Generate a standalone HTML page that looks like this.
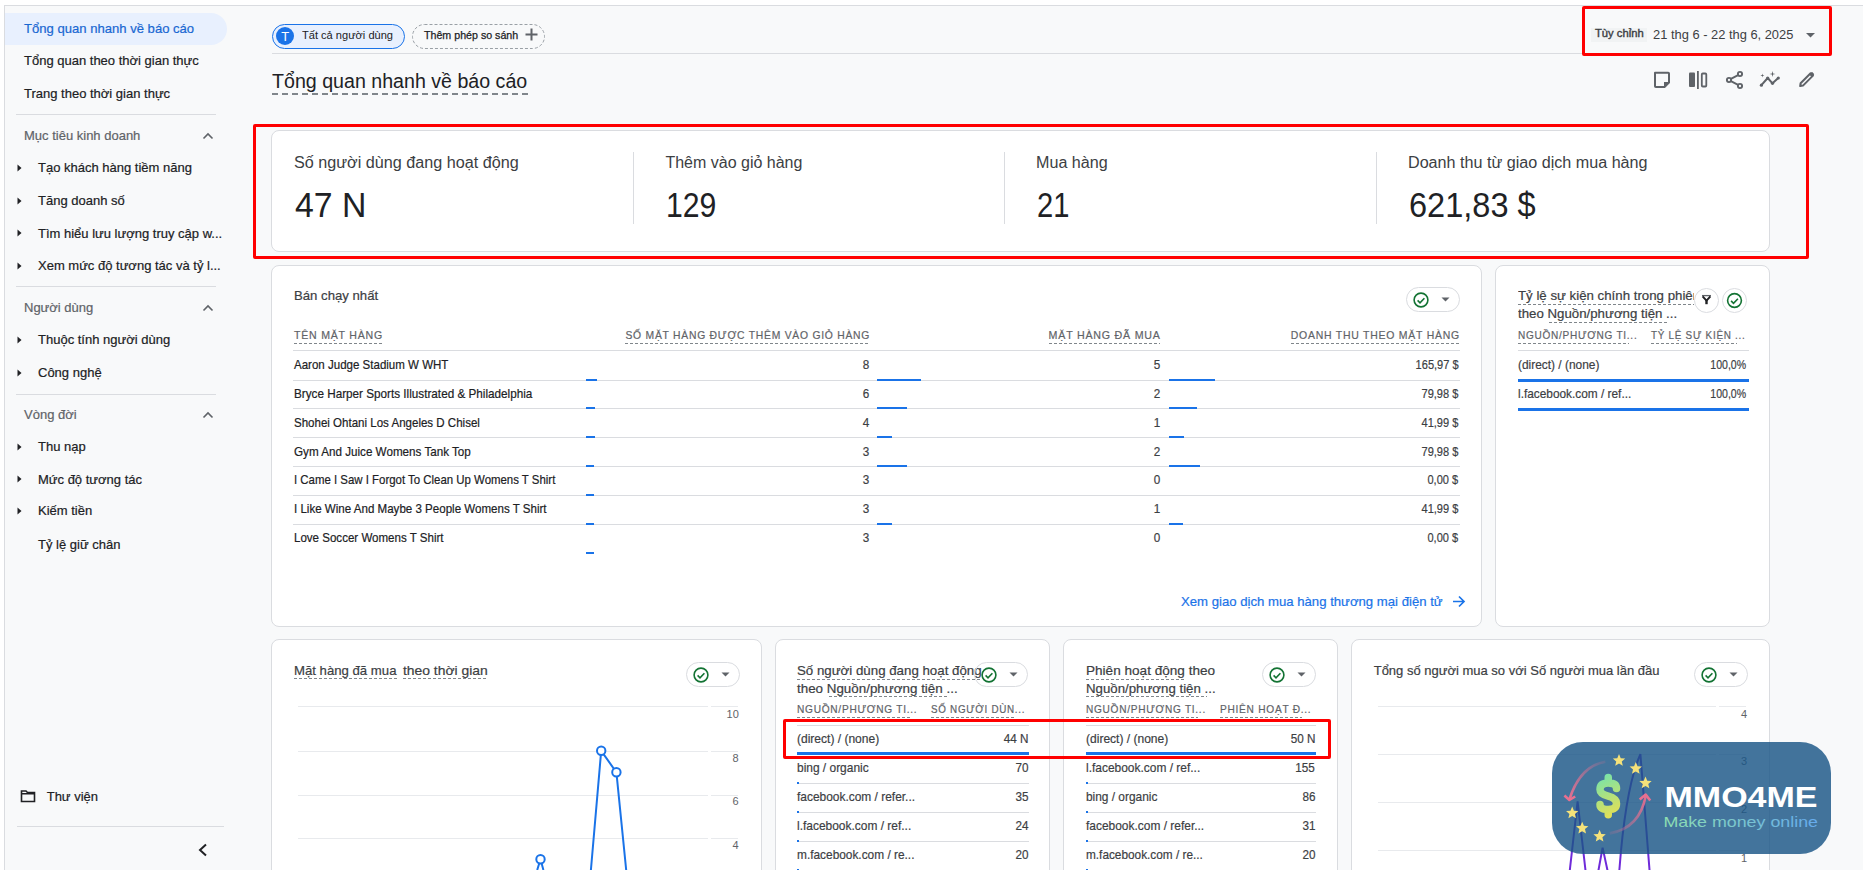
<!DOCTYPE html>
<html><head><meta charset="utf-8"><title>GA</title>
<style>
html,body{margin:0;padding:0;}
body{width:1863px;height:870px;overflow:hidden;position:relative;background:#f8f9fa;font-family:"Liberation Sans",sans-serif;}
.t{position:absolute;white-space:nowrap;}
.b{position:absolute;}
</style></head><body>
<div class="b" style="left:0px;top:0px;width:1863px;height:5px;background:#fff"></div>
<div class="b" style="left:0px;top:5px;width:1863px;height:1px;background:#dadce0"></div>
<div class="b" style="left:0px;top:5px;width:4px;height:865px;background:#fff"></div>
<div class="b" style="left:4px;top:5px;width:1px;height:865px;background:#dadce0"></div>
<div class="b" style="left:5px;top:13px;width:222px;height:32px;background:#e8f0fe;border-radius:0 16px 16px 0"></div>
<div class="t" style="top:22.00px;font-size:13px;line-height:13px;color:#1967d2;left:24.00px;transform-origin:0 0;transform:scaleX(1.0059);-webkit-text-stroke:0.2px currentColor;">Tổng quan nhanh về báo cáo</div>
<div class="t" style="top:54.00px;font-size:13px;line-height:13px;color:#202124;left:24.00px;transform-origin:0 0;-webkit-text-stroke:0.2px currentColor;">Tổng quan theo thời gian thực</div>
<div class="t" style="top:87.00px;font-size:13px;line-height:13px;color:#202124;left:24.00px;transform-origin:0 0;-webkit-text-stroke:0.2px currentColor;">Trang theo thời gian thực</div>
<div class="b" style="left:16px;top:114px;width:200px;height:1px;background:#dadce0"></div>
<div class="t" style="top:129.00px;font-size:13px;line-height:13px;color:#5f6368;left:24.00px;transform-origin:0 0;-webkit-text-stroke:0.2px currentColor;">Mục tiêu kinh doanh</div>
<svg class="b" style="left:202px;top:132px;" width="12" height="8" viewBox="0 0 12 8"><path d="M1.5 6.5 L6 2 L10.5 6.5" fill="none" stroke="#5f6368" stroke-width="1.6"/></svg>
<svg class="b" style="left:17px;top:163.9px;" width="5" height="8" viewBox="0 0 5 8"><path d="M0.5 0.5 L4.5 4 L0.5 7.5Z" fill="#202124"/></svg>
<div class="t" style="top:161.40px;font-size:13px;line-height:13px;color:#202124;left:38.00px;transform-origin:0 0;-webkit-text-stroke:0.2px currentColor;">Tạo khách hàng tiềm năng</div>
<svg class="b" style="left:17px;top:196.5px;" width="5" height="8" viewBox="0 0 5 8"><path d="M0.5 0.5 L4.5 4 L0.5 7.5Z" fill="#202124"/></svg>
<div class="t" style="top:194.00px;font-size:13px;line-height:13px;color:#202124;left:38.00px;transform-origin:0 0;-webkit-text-stroke:0.2px currentColor;">Tăng doanh số</div>
<svg class="b" style="left:17px;top:229.10000000000002px;" width="5" height="8" viewBox="0 0 5 8"><path d="M0.5 0.5 L4.5 4 L0.5 7.5Z" fill="#202124"/></svg>
<div class="t" style="top:226.60px;font-size:13px;line-height:13px;color:#202124;left:38.00px;transform-origin:0 0;-webkit-text-stroke:0.2px currentColor;">Tìm hiểu lưu lượng truy cập w...</div>
<svg class="b" style="left:17px;top:261.70000000000005px;" width="5" height="8" viewBox="0 0 5 8"><path d="M0.5 0.5 L4.5 4 L0.5 7.5Z" fill="#202124"/></svg>
<div class="t" style="top:259.20px;font-size:13px;line-height:13px;color:#202124;left:38.00px;transform-origin:0 0;-webkit-text-stroke:0.2px currentColor;">Xem mức độ tương tác và tỷ l...</div>
<div class="b" style="left:16px;top:286px;width:200px;height:1px;background:#dadce0"></div>
<div class="t" style="top:301.20px;font-size:13px;line-height:13px;color:#5f6368;left:24.00px;transform-origin:0 0;-webkit-text-stroke:0.2px currentColor;">Người dùng</div>
<svg class="b" style="left:202px;top:304px;" width="12" height="8" viewBox="0 0 12 8"><path d="M1.5 6.5 L6 2 L10.5 6.5" fill="none" stroke="#5f6368" stroke-width="1.6"/></svg>
<svg class="b" style="left:17px;top:335.9px;" width="5" height="8" viewBox="0 0 5 8"><path d="M0.5 0.5 L4.5 4 L0.5 7.5Z" fill="#202124"/></svg>
<div class="t" style="top:333.40px;font-size:13px;line-height:13px;color:#202124;left:38.00px;transform-origin:0 0;-webkit-text-stroke:0.2px currentColor;">Thuộc tính người dùng</div>
<svg class="b" style="left:17px;top:368.9px;" width="5" height="8" viewBox="0 0 5 8"><path d="M0.5 0.5 L4.5 4 L0.5 7.5Z" fill="#202124"/></svg>
<div class="t" style="top:366.40px;font-size:13px;line-height:13px;color:#202124;left:38.00px;transform-origin:0 0;-webkit-text-stroke:0.2px currentColor;">Công nghệ</div>
<div class="b" style="left:16px;top:394px;width:200px;height:1px;background:#dadce0"></div>
<div class="t" style="top:408.00px;font-size:13px;line-height:13px;color:#5f6368;left:24.00px;transform-origin:0 0;-webkit-text-stroke:0.2px currentColor;">Vòng đời</div>
<svg class="b" style="left:202px;top:411px;" width="12" height="8" viewBox="0 0 12 8"><path d="M1.5 6.5 L6 2 L10.5 6.5" fill="none" stroke="#5f6368" stroke-width="1.6"/></svg>
<svg class="b" style="left:17px;top:442.5px;" width="5" height="8" viewBox="0 0 5 8"><path d="M0.5 0.5 L4.5 4 L0.5 7.5Z" fill="#202124"/></svg>
<div class="t" style="top:440.00px;font-size:13px;line-height:13px;color:#202124;left:38.00px;transform-origin:0 0;-webkit-text-stroke:0.2px currentColor;">Thu nạp</div>
<svg class="b" style="left:17px;top:475.1px;" width="5" height="8" viewBox="0 0 5 8"><path d="M0.5 0.5 L4.5 4 L0.5 7.5Z" fill="#202124"/></svg>
<div class="t" style="top:472.60px;font-size:13px;line-height:13px;color:#202124;left:38.00px;transform-origin:0 0;-webkit-text-stroke:0.2px currentColor;">Mức độ tương tác</div>
<svg class="b" style="left:17px;top:506.5px;" width="5" height="8" viewBox="0 0 5 8"><path d="M0.5 0.5 L4.5 4 L0.5 7.5Z" fill="#202124"/></svg>
<div class="t" style="top:504.00px;font-size:13px;line-height:13px;color:#202124;left:38.00px;transform-origin:0 0;-webkit-text-stroke:0.2px currentColor;">Kiếm tiền</div>
<div class="t" style="top:537.60px;font-size:13px;line-height:13px;color:#202124;left:38.00px;transform-origin:0 0;-webkit-text-stroke:0.2px currentColor;">Tỷ lệ giữ chân</div>
<svg class="b" style="left:20px;top:789px;" width="16" height="14" viewBox="0 0 16 14"><path d="M1.5 2 H6 L7.5 3.5 H14.5 V12.5 H1.5 Z M1.5 4.8 H14.5" fill="none" stroke="#202124" stroke-width="1.6"/></svg>
<div class="t" style="top:789.70px;font-size:13px;line-height:13px;color:#202124;left:46.70px;transform-origin:0 0;-webkit-text-stroke:0.2px currentColor;">Thư viện</div>
<div class="b" style="left:17px;top:826px;width:207px;height:1px;background:#dadce0"></div>
<svg class="b" style="left:197px;top:843px;" width="12" height="14" viewBox="0 0 12 14"><path d="M9 1.5 L3 7 L9 12.5" fill="none" stroke="#202124" stroke-width="2"/></svg>
<div class="b" style="left:272px;top:24px;width:131px;height:23px;border:1px solid #1a73e8;background:#e8f0fe;border-radius:13px"></div>
<svg class="b" style="left:276px;top:27px;" width="18" height="18" viewBox="0 0 18 18"><circle cx="9" cy="9" r="9" fill="#1a73e8"/></svg>
<div class="t" style="top:29.60px;font-size:13px;line-height:13px;color:#fff;left:281.20px;transform-origin:0 0;">T</div>
<div class="t" style="top:30.19px;font-size:11px;line-height:11px;color:#202124;left:302.00px;transform-origin:0 0;transform:scaleX(1.0067);">Tất cả người dùng</div>
<svg class="b" style="left:412px;top:24px;" width="133" height="25" viewBox="0 0 133 25"><rect x="0.5" y="0.5" width="132" height="24" rx="12" fill="none" stroke="#9aa0a6" stroke-width="1" stroke-dasharray="3 2"/></svg>
<div class="t" style="top:30.19px;font-size:11px;line-height:11px;color:#202124;left:424.00px;transform-origin:0 0;transform:scaleX(0.9691);-webkit-text-stroke:0.25px #202124;">Thêm phép so sánh</div>
<svg class="b" style="left:525px;top:28px;" width="13" height="13" viewBox="0 0 13 13"><path d="M6.5 0.5 V12.5 M0.5 6.5 H12.5" stroke="#5f6368" stroke-width="2"/></svg>
<div class="b" style="left:272px;top:53px;width:1558px;height:1px;background:#dadce0"></div>
<div class="b" style="left:1591px;top:28px;width:56px;height:14px;background:#f1f3f4"></div>
<div class="t" style="top:29.33px;font-size:10px;line-height:10px;color:#3c4043;left:1594.70px;transform-origin:0 0;transform:scaleX(1.1233);-webkit-text-stroke:0.35px #3c4043;">Tùy chỉnh</div>
<div class="t" style="top:28.84px;font-size:12px;line-height:12px;color:#3c4043;left:1653.00px;transform-origin:0 0;transform:scaleX(1.0733);">21 thg 6 - 22 thg 6, 2025</div>
<svg class="b" style="left:1806px;top:33px;" width="9" height="5" viewBox="0 0 9 5"><path d="M0 0 H9 L4.5 4.5Z" fill="#5f6368"/></svg>
<div class="t" style="top:70.87px;font-size:20px;line-height:20px;color:#202124;left:272.20px;transform-origin:0 0;transform:scaleX(0.9808);">Tổng quan nhanh về báo cáo</div>
<div class="b" style="left:272px;top:93px;width:256px;height:2px;background:repeating-linear-gradient(90deg,#80868b 0 6px,transparent 6px 10px)"></div>
<svg class="b" style="left:1652px;top:70px;" width="20" height="20" viewBox="0 0 20 20"><path d="M3 2.8 H16.2 Q17 2.8 17 3.6 V12.5 L12.5 17 H3.8 Q3 17 3 16.2 Z" fill="none" stroke="#5f6368" stroke-width="2" stroke-linejoin="round"/><path d="M12 17 V12 H17 Z" fill="#5f6368"/></svg>
<svg class="b" style="left:1686px;top:69px;" width="24" height="22" viewBox="0 0 24 22"><rect x="3" y="3.6" width="6" height="14.5" rx="1" fill="#5f6368"/><rect x="11" y="2" width="1.8" height="18" fill="#5f6368"/><rect x="15.8" y="4.5" width="4.5" height="13" rx="1" fill="none" stroke="#5f6368" stroke-width="1.8"/></svg>
<svg class="b" style="left:1724px;top:68px;" width="22" height="22" viewBox="0 0 22 22"><circle cx="16" cy="6" r="2.1" fill="none" stroke="#5f6368" stroke-width="1.9"/><circle cx="5" cy="12" r="2.1" fill="none" stroke="#5f6368" stroke-width="1.9"/><circle cx="16" cy="18" r="2.1" fill="none" stroke="#5f6368" stroke-width="1.9"/><path d="M6.9 10.9 L14.1 7.1 M6.9 13.1 L14.1 16.9" stroke="#5f6368" stroke-width="1.9"/></svg>
<svg class="b" style="left:1758px;top:68px;" width="24" height="22" viewBox="0 0 24 22"><path d="M3.4 17.2 L9.7 10 L14.5 15.3 L20.3 10" fill="none" stroke="#5f6368" stroke-width="2" stroke-linejoin="round"/><circle cx="3.4" cy="17.2" r="1.6" fill="#5f6368"/><circle cx="9.7" cy="10" r="1.6" fill="#5f6368"/><circle cx="14.5" cy="15.3" r="1.6" fill="#5f6368"/><circle cx="20.3" cy="10" r="1.6" fill="#5f6368"/><path d="M14.5 3 L15.1 5.4 L17.5 6 L15.1 6.6 L14.5 9 L13.9 6.6 L11.5 6 L13.9 5.4Z" fill="#5f6368"/><path d="M4.4 5.5 L4.8 7.1 L6.4 7.5 L4.8 7.9 L4.4 9.5 L4 7.9 L2.4 7.5 L4 7.1Z" fill="#5f6368"/></svg>
<svg class="b" style="left:1796px;top:70px;" width="20" height="20" viewBox="0 0 20 20"><path d="M4.2 16 L4.6 13.2 L14.6 3.2 L17 5.6 L7 15.6 Z" fill="none" stroke="#5f6368" stroke-width="2" stroke-linejoin="round"/><path d="M13.2 4.6 L15.5 2.3 Q16 1.8 16.5 2.3 L17.9 3.7 Q18.4 4.2 17.9 4.7 L15.6 7 Z" fill="#5f6368"/></svg>
<div class="b" style="left:271px;top:130px;width:1497px;height:120px;background:#fff;border:1px solid #dadce0;border-radius:8px"></div>
<div class="b" style="left:633px;top:152px;width:1px;height:72px;background:#dadce0"></div>
<div class="b" style="left:1004px;top:152px;width:1px;height:72px;background:#dadce0"></div>
<div class="b" style="left:1376px;top:152px;width:1px;height:72px;background:#dadce0"></div>
<div class="t" style="top:155.26px;font-size:16px;line-height:16px;color:#3c4043;left:293.60px;transform-origin:0 0;transform:scaleX(1.0108);">Số người dùng đang hoạt động</div>
<div class="t" style="top:187.37px;font-size:35px;line-height:35px;color:#202124;left:294.60px;transform-origin:0 0;transform:scaleX(0.9662);">47 N</div>
<div class="t" style="top:155.26px;font-size:16px;line-height:16px;color:#3c4043;left:665.40px;transform-origin:0 0;">Thêm vào giỏ hàng</div>
<div class="t" style="top:187.37px;font-size:35px;line-height:35px;color:#202124;left:666.40px;transform-origin:0 0;transform:scaleX(0.8621);">129</div>
<div class="t" style="top:155.26px;font-size:16px;line-height:16px;color:#3c4043;left:1036.00px;transform-origin:0 0;transform:scaleX(1.0070);">Mua hàng</div>
<div class="t" style="top:187.37px;font-size:35px;line-height:35px;color:#202124;left:1037.00px;transform-origin:0 0;transform:scaleX(0.8333);">21</div>
<div class="t" style="top:155.26px;font-size:16px;line-height:16px;color:#3c4043;left:1407.60px;transform-origin:0 0;transform:scaleX(1.0084);">Doanh thu từ giao dịch mua hàng</div>
<div class="t" style="top:187.37px;font-size:35px;line-height:35px;color:#202124;left:1408.60px;transform-origin:0 0;transform:scaleX(0.9294);">621,83 $</div>
<div class="b" style="left:1582px;top:6px;width:250px;height:50px;border:3px solid #ff0000;border-radius:2px;box-sizing:border-box"></div>
<div class="b" style="left:253px;top:124px;width:1556px;height:135px;border:3px solid #ff0000;border-radius:2px;box-sizing:border-box"></div>
<div class="b" style="left:271px;top:265px;width:1209px;height:360px;background:#fff;border:1px solid #dadce0;border-radius:8px"></div>
<div class="t" style="top:289.30px;font-size:13px;line-height:13px;color:#3c4043;left:293.70px;transform-origin:0 0;transform:scaleX(1.0119);-webkit-text-stroke:0.2px currentColor;">Bán chạy nhất</div>
<div class="b" style="left:1406px;top:287px;width:52px;height:23px;border:1px solid #dadce0;border-radius:13px"></div>
<svg class="b" style="left:1413px;top:291.5px;" width="16" height="16" viewBox="0 0 16 16"><circle cx="8" cy="8" r="6.9" fill="none" stroke="#137333" stroke-width="1.6"/><path d="M4.6 8.4 L7 10.8 L11.4 6.2" fill="none" stroke="#137333" stroke-width="1.6"/></svg>
<svg class="b" style="left:1440.5px;top:297.0px;" width="9" height="5" viewBox="0 0 9 5"><path d="M0.5 0.5 H8.5 L4.5 4.5Z" fill="#5f6368"/></svg>
<div class="t" style="top:329.69px;font-size:11px;line-height:11px;color:#5f6368;letter-spacing:0.8px;left:293.70px;transform-origin:0 0;transform:scaleX(0.9619);-webkit-text-stroke:0.2px #5f6368;">TÊN MẶT HÀNG</div>
<div class="b" style="left:293.7px;top:343px;width:88.3px;height:1px;background:repeating-linear-gradient(90deg,#80868b 0 3px,transparent 3px 5px)"></div>
<div class="t" style="top:329.69px;font-size:11px;line-height:11px;color:#5f6368;letter-spacing:0.8px;right:993.18px;transform-origin:100% 0;transform:scaleX(0.9406);-webkit-text-stroke:0.2px #5f6368;">SỐ MẶT HÀNG ĐƯỢC THÊM VÀO GIỎ HÀNG</div>
<div class="b" style="left:625px;top:343px;width:244px;height:1px;background:repeating-linear-gradient(90deg,#80868b 0 3px,transparent 3px 5px)"></div>
<div class="t" style="top:329.69px;font-size:11px;line-height:11px;color:#5f6368;letter-spacing:0.8px;right:702.20px;transform-origin:100% 0;transform:scaleX(0.9687);-webkit-text-stroke:0.2px #5f6368;">MẶT HÀNG ĐÃ MUA</div>
<div class="b" style="left:1048.7px;top:343px;width:111.6px;height:1px;background:repeating-linear-gradient(90deg,#80868b 0 3px,transparent 3px 5px)"></div>
<div class="t" style="top:329.69px;font-size:11px;line-height:11px;color:#5f6368;letter-spacing:0.8px;right:403.38px;transform-origin:100% 0;transform:scaleX(0.9505);-webkit-text-stroke:0.2px #5f6368;">DOANH THU THEO MẶT HÀNG</div>
<div class="b" style="left:1290.5px;top:343px;width:168.8px;height:1px;background:repeating-linear-gradient(90deg,#80868b 0 3px,transparent 3px 5px)"></div>
<div class="b" style="left:293px;top:350px;width:1167px;height:1px;background:#dadce0"></div>
<div class="t" style="top:358.00px;font-size:13px;line-height:13px;color:#202124;left:293.70px;transform-origin:0 0;transform:scaleX(0.8868);-webkit-text-stroke:0.2px currentColor;">Aaron Judge Stadium W WHT</div>
<div class="t" style="top:358.00px;font-size:13px;line-height:13px;color:#3c4043;right:993.77px;transform-origin:100% 0;transform:scaleX(0.9000);-webkit-text-stroke:0.2px currentColor;">8</div>
<div class="t" style="top:358.00px;font-size:13px;line-height:13px;color:#3c4043;right:702.47px;transform-origin:100% 0;transform:scaleX(0.9000);-webkit-text-stroke:0.2px currentColor;">5</div>
<div class="t" style="top:358.00px;font-size:13px;line-height:13px;color:#3c4043;right:404.08px;transform-origin:100% 0;transform:scaleX(0.8500);-webkit-text-stroke:0.2px currentColor;">165,97 $</div>
<div class="b" style="left:293px;top:380px;width:1167px;height:1px;background:#dadce0"></div>
<div class="b" style="left:586px;top:379px;width:11px;height:2px;background:#1a73e8"></div>
<div class="b" style="left:877px;top:379px;width:44px;height:2px;background:#1a73e8"></div>
<div class="b" style="left:1169px;top:379px;width:46px;height:2px;background:#1a73e8"></div>
<div class="t" style="top:386.85px;font-size:13px;line-height:13px;color:#202124;left:293.70px;transform-origin:0 0;transform:scaleX(0.9011);-webkit-text-stroke:0.2px currentColor;">Bryce Harper Sports Illustrated &amp; Philadelphia</div>
<div class="t" style="top:386.85px;font-size:13px;line-height:13px;color:#3c4043;right:993.77px;transform-origin:100% 0;transform:scaleX(0.9000);-webkit-text-stroke:0.2px currentColor;">6</div>
<div class="t" style="top:386.85px;font-size:13px;line-height:13px;color:#3c4043;right:702.47px;transform-origin:100% 0;transform:scaleX(0.9000);-webkit-text-stroke:0.2px currentColor;">2</div>
<div class="t" style="top:386.85px;font-size:13px;line-height:13px;color:#3c4043;right:404.31px;transform-origin:100% 0;transform:scaleX(0.8500);-webkit-text-stroke:0.2px currentColor;">79,98 $</div>
<div class="b" style="left:293px;top:408px;width:1167px;height:1px;background:#dadce0"></div>
<div class="b" style="left:586px;top:407px;width:9px;height:2px;background:#1a73e8"></div>
<div class="b" style="left:877px;top:407px;width:30px;height:2px;background:#1a73e8"></div>
<div class="b" style="left:1169px;top:407px;width:28px;height:2px;background:#1a73e8"></div>
<div class="t" style="top:415.70px;font-size:13px;line-height:13px;color:#202124;left:293.70px;transform-origin:0 0;transform:scaleX(0.8871);-webkit-text-stroke:0.2px currentColor;">Shohei Ohtani Los Angeles D Chisel</div>
<div class="t" style="top:415.70px;font-size:13px;line-height:13px;color:#3c4043;right:993.77px;transform-origin:100% 0;transform:scaleX(0.9000);-webkit-text-stroke:0.2px currentColor;">4</div>
<div class="t" style="top:415.70px;font-size:13px;line-height:13px;color:#3c4043;right:702.47px;transform-origin:100% 0;transform:scaleX(0.9000);-webkit-text-stroke:0.2px currentColor;">1</div>
<div class="t" style="top:415.70px;font-size:13px;line-height:13px;color:#3c4043;right:404.31px;transform-origin:100% 0;transform:scaleX(0.8500);-webkit-text-stroke:0.2px currentColor;">41,99 $</div>
<div class="b" style="left:293px;top:437px;width:1167px;height:1px;background:#dadce0"></div>
<div class="b" style="left:586px;top:436px;width:9px;height:2px;background:#1a73e8"></div>
<div class="b" style="left:877px;top:436px;width:15px;height:2px;background:#1a73e8"></div>
<div class="b" style="left:1169px;top:436px;width:15px;height:2px;background:#1a73e8"></div>
<div class="t" style="top:444.55px;font-size:13px;line-height:13px;color:#202124;left:293.70px;transform-origin:0 0;transform:scaleX(0.8964);-webkit-text-stroke:0.2px currentColor;">Gym And Juice Womens Tank Top</div>
<div class="t" style="top:444.55px;font-size:13px;line-height:13px;color:#3c4043;right:993.77px;transform-origin:100% 0;transform:scaleX(0.9000);-webkit-text-stroke:0.2px currentColor;">3</div>
<div class="t" style="top:444.55px;font-size:13px;line-height:13px;color:#3c4043;right:702.47px;transform-origin:100% 0;transform:scaleX(0.9000);-webkit-text-stroke:0.2px currentColor;">2</div>
<div class="t" style="top:444.55px;font-size:13px;line-height:13px;color:#3c4043;right:404.31px;transform-origin:100% 0;transform:scaleX(0.8500);-webkit-text-stroke:0.2px currentColor;">79,98 $</div>
<div class="b" style="left:293px;top:466px;width:1167px;height:1px;background:#dadce0"></div>
<div class="b" style="left:586px;top:465px;width:8px;height:2px;background:#1a73e8"></div>
<div class="b" style="left:877px;top:465px;width:30px;height:2px;background:#1a73e8"></div>
<div class="b" style="left:1169px;top:465px;width:31px;height:2px;background:#1a73e8"></div>
<div class="t" style="top:473.40px;font-size:13px;line-height:13px;color:#202124;left:293.70px;transform-origin:0 0;transform:scaleX(0.8785);-webkit-text-stroke:0.2px currentColor;">I Came I Saw I Forgot To Clean Up Womens T Shirt</div>
<div class="t" style="top:473.40px;font-size:13px;line-height:13px;color:#3c4043;right:993.77px;transform-origin:100% 0;transform:scaleX(0.9000);-webkit-text-stroke:0.2px currentColor;">3</div>
<div class="t" style="top:473.40px;font-size:13px;line-height:13px;color:#3c4043;right:702.47px;transform-origin:100% 0;transform:scaleX(0.9000);-webkit-text-stroke:0.2px currentColor;">0</div>
<div class="t" style="top:473.40px;font-size:13px;line-height:13px;color:#3c4043;right:404.54px;transform-origin:100% 0;transform:scaleX(0.8500);-webkit-text-stroke:0.2px currentColor;">0,00 $</div>
<div class="b" style="left:293px;top:495px;width:1167px;height:1px;background:#dadce0"></div>
<div class="b" style="left:586px;top:494px;width:8px;height:2px;background:#1a73e8"></div>
<div class="t" style="top:502.25px;font-size:13px;line-height:13px;color:#202124;left:293.70px;transform-origin:0 0;transform:scaleX(0.8894);-webkit-text-stroke:0.2px currentColor;">I Like Wine And Maybe 3 People Womens T Shirt</div>
<div class="t" style="top:502.25px;font-size:13px;line-height:13px;color:#3c4043;right:993.77px;transform-origin:100% 0;transform:scaleX(0.9000);-webkit-text-stroke:0.2px currentColor;">3</div>
<div class="t" style="top:502.25px;font-size:13px;line-height:13px;color:#3c4043;right:702.47px;transform-origin:100% 0;transform:scaleX(0.9000);-webkit-text-stroke:0.2px currentColor;">1</div>
<div class="t" style="top:502.25px;font-size:13px;line-height:13px;color:#3c4043;right:404.31px;transform-origin:100% 0;transform:scaleX(0.8500);-webkit-text-stroke:0.2px currentColor;">41,99 $</div>
<div class="b" style="left:293px;top:524px;width:1167px;height:1px;background:#dadce0"></div>
<div class="b" style="left:586px;top:523px;width:8px;height:2px;background:#1a73e8"></div>
<div class="b" style="left:877px;top:523px;width:15px;height:2px;background:#1a73e8"></div>
<div class="b" style="left:1169px;top:523px;width:14px;height:2px;background:#1a73e8"></div>
<div class="t" style="top:531.10px;font-size:13px;line-height:13px;color:#202124;left:293.70px;transform-origin:0 0;transform:scaleX(0.8882);-webkit-text-stroke:0.2px currentColor;">Love Soccer Womens T Shirt</div>
<div class="t" style="top:531.10px;font-size:13px;line-height:13px;color:#3c4043;right:993.77px;transform-origin:100% 0;transform:scaleX(0.9000);-webkit-text-stroke:0.2px currentColor;">3</div>
<div class="t" style="top:531.10px;font-size:13px;line-height:13px;color:#3c4043;right:702.47px;transform-origin:100% 0;transform:scaleX(0.9000);-webkit-text-stroke:0.2px currentColor;">0</div>
<div class="t" style="top:531.10px;font-size:13px;line-height:13px;color:#3c4043;right:404.54px;transform-origin:100% 0;transform:scaleX(0.8500);-webkit-text-stroke:0.2px currentColor;">0,00 $</div>
<div class="b" style="left:586px;top:552px;width:8px;height:2px;background:#1a73e8"></div>
<div class="t" style="top:595.40px;font-size:13px;line-height:13px;color:#1a73e8;left:1181.00px;transform-origin:0 0;transform:scaleX(1.0116);-webkit-text-stroke:0.2px currentColor;">Xem giao dịch mua hàng thương mại điện tử</div>
<svg class="b" style="left:1452px;top:595px;" width="14" height="13" viewBox="0 0 14 13"><path d="M1 6.5 H12 M7 1.5 L12 6.5 L7 11.5" fill="none" stroke="#1a73e8" stroke-width="1.7"/></svg>
<div class="b" style="left:1495px;top:265px;width:273px;height:360px;background:#fff;border:1px solid #dadce0;border-radius:8px"></div>
<div class="b" style="left:1518px;top:285px;width:176px;height:40px;overflow:hidden">
<div class="t" style="top:4.20px;font-size:13px;line-height:13px;color:#3c4043;left:0.00px;transform-origin:0 0;transform:scaleX(1.0200);-webkit-text-stroke:0.2px currentColor;">Tỷ lệ sự kiện chính trong phiên</div>
<div class="t" style="top:22.00px;font-size:13px;line-height:13px;color:#3c4043;left:0.00px;transform-origin:0 0;transform:scaleX(1.0200);-webkit-text-stroke:0.2px currentColor;">theo Nguồn/phương tiện ...</div>
<div class="b" style="left:0px;top:18.69999999999999px;width:176px;height:1px;background:repeating-linear-gradient(90deg,#80868b 0 3px,transparent 3px 5px)"></div>
</div>
<div class="b" style="left:1549px;top:321.6px;width:120px;height:1px;background:repeating-linear-gradient(90deg,#80868b 0 3px,transparent 3px 5px)"></div>
<svg class="b" style="left:1694px;top:288px;" width="25" height="25" viewBox="0 0 25 25"><circle cx="12.5" cy="12.5" r="12" fill="#fff" stroke="#dadce0"/><path d="M8 7.6 H17" stroke="#5f6368" stroke-width="1.3"/><path d="M8.6 8.4 L12.5 12.6 L16.4 8.4" fill="none" stroke="#202124" stroke-width="2"/><path d="M12.5 12 V16.2" stroke="#202124" stroke-width="2.4"/></svg>
<svg class="b" style="left:1722px;top:288px;" width="25" height="25" viewBox="0 0 25 25"><circle cx="12.5" cy="12.5" r="12" fill="#fff" stroke="#dadce0"/><circle cx="12.5" cy="12.5" r="6.9" fill="none" stroke="#137333" stroke-width="1.6"/><path d="M9.1 12.9 L11.5 15.3 L15.9 10.7" fill="none" stroke="#137333" stroke-width="1.6"/></svg>
<div class="t" style="top:329.59px;font-size:11px;line-height:11px;color:#5f6368;letter-spacing:0.8px;left:1518.00px;transform-origin:0 0;transform:scaleX(0.9128);-webkit-text-stroke:0.2px #5f6368;">NGUỒN/PHƯƠNG TI...</div>
<div class="b" style="left:1518px;top:342.9px;width:111px;height:1px;background:repeating-linear-gradient(90deg,#80868b 0 3px,transparent 3px 5px)"></div>
<div class="t" style="top:329.59px;font-size:11px;line-height:11px;color:#5f6368;letter-spacing:0.8px;left:1651.30px;transform-origin:0 0;transform:scaleX(0.9008);-webkit-text-stroke:0.2px #5f6368;">TỶ LỆ SỰ KIỆN ...</div>
<div class="b" style="left:1651.3px;top:342.9px;width:86px;height:1px;background:repeating-linear-gradient(90deg,#80868b 0 3px,transparent 3px 5px)"></div>
<div class="b" style="left:1518px;top:350px;width:231px;height:1px;background:#dadce0"></div>
<div class="t" style="top:358.20px;font-size:13px;line-height:13px;color:#3c4043;left:1518.00px;transform-origin:0 0;transform:scaleX(0.9157);-webkit-text-stroke:0.2px currentColor;">(direct) / (none)</div>
<div class="t" style="top:358.20px;font-size:13px;line-height:13px;color:#3c4043;right:116.49px;transform-origin:100% 0;transform:scaleX(0.8111);-webkit-text-stroke:0.2px currentColor;">100,0%</div>
<div class="b" style="left:1518px;top:379px;width:231px;height:3px;background:#1a73e8"></div>
<div class="t" style="top:387.00px;font-size:13px;line-height:13px;color:#3c4043;left:1518.00px;transform-origin:0 0;transform:scaleX(0.9113);-webkit-text-stroke:0.2px currentColor;">l.facebook.com / ref...</div>
<div class="t" style="top:387.00px;font-size:13px;line-height:13px;color:#3c4043;right:116.49px;transform-origin:100% 0;transform:scaleX(0.8111);-webkit-text-stroke:0.2px currentColor;">100,0%</div>
<div class="b" style="left:1518px;top:408px;width:231px;height:3px;background:#1a73e8"></div>
<div class="b" style="left:271px;top:639px;width:489px;height:241px;background:#fff;border:1px solid #dadce0;border-radius:8px"></div>
<div class="b" style="left:775px;top:639px;width:273px;height:241px;background:#fff;border:1px solid #dadce0;border-radius:8px"></div>
<div class="b" style="left:1063px;top:639px;width:273px;height:241px;background:#fff;border:1px solid #dadce0;border-radius:8px"></div>
<div class="b" style="left:1351px;top:639px;width:417px;height:241px;background:#fff;border:1px solid #dadce0;border-radius:8px"></div>
<div class="t" style="top:664.20px;font-size:13px;line-height:13px;color:#3c4043;left:293.50px;transform-origin:0 0;transform:scaleX(1.0127);-webkit-text-stroke:0.2px currentColor;">Mặt hàng đã mua</div>
<div class="b" style="left:293.5px;top:678px;width:103.3px;height:1px;background:repeating-linear-gradient(90deg,#80868b 0 3px,transparent 3px 5px)"></div>
<div class="t" style="top:664.20px;font-size:13px;line-height:13px;color:#3c4043;left:403.20px;transform-origin:0 0;transform:scaleX(1.0671);-webkit-text-stroke:0.2px currentColor;">theo thời gian</div>
<div class="b" style="left:403.2px;top:678px;width:84.3px;height:1px;background:repeating-linear-gradient(90deg,#80868b 0 3px,transparent 3px 5px)"></div>
<div class="b" style="left:686px;top:662px;width:52px;height:23px;border:1px solid #dadce0;border-radius:13px"></div>
<svg class="b" style="left:693px;top:666.5px;" width="16" height="16" viewBox="0 0 16 16"><circle cx="8" cy="8" r="6.9" fill="none" stroke="#137333" stroke-width="1.6"/><path d="M4.6 8.4 L7 10.8 L11.4 6.2" fill="none" stroke="#137333" stroke-width="1.6"/></svg>
<svg class="b" style="left:720.5px;top:672.0px;" width="9" height="5" viewBox="0 0 9 5"><path d="M0.5 0.5 H8.5 L4.5 4.5Z" fill="#5f6368"/></svg>
<div class="b" style="left:298px;top:706px;width:410px;height:1px;background:#e8eaed"></div>
<div class="b" style="left:711px;top:706px;width:27px;height:1px;background:#e8eaed"></div>
<div class="b" style="left:298px;top:751px;width:410px;height:1px;background:#e8eaed"></div>
<div class="b" style="left:711px;top:751px;width:27px;height:1px;background:#e8eaed"></div>
<div class="b" style="left:298px;top:795px;width:410px;height:1px;background:#e8eaed"></div>
<div class="b" style="left:711px;top:795px;width:27px;height:1px;background:#e8eaed"></div>
<div class="b" style="left:298px;top:838px;width:410px;height:1px;background:#e8eaed"></div>
<div class="b" style="left:711px;top:838px;width:27px;height:1px;background:#e8eaed"></div>
<div class="t" style="top:709.49px;font-size:11px;line-height:11px;color:#5f6368;right:1124.15px;transform-origin:100% 0;">10</div>
<div class="t" style="top:753.29px;font-size:11px;line-height:11px;color:#5f6368;right:1124.28px;transform-origin:100% 0;">8</div>
<div class="t" style="top:796.49px;font-size:11px;line-height:11px;color:#5f6368;right:1124.28px;transform-origin:100% 0;">6</div>
<div class="t" style="top:839.69px;font-size:11px;line-height:11px;color:#5f6368;right:1124.28px;transform-origin:100% 0;">4</div>
<svg class="b" style="left:520px;top:740px;" width="120" height="130" viewBox="0 0 120 130"><polyline points="17.2,130 20.5,119.3 23.4,130" fill="none" stroke="#1a73e8" stroke-width="2"/><polyline points="70.9,130 81.2,10.8 96.4,32.3 106.2,130" fill="none" stroke="#1a73e8" stroke-width="2"/><circle cx="20.5" cy="119.3" r="4.2" fill="#fff" stroke="#1a73e8" stroke-width="2"/><circle cx="81.2" cy="10.8" r="4.2" fill="#fff" stroke="#1a73e8" stroke-width="2"/><circle cx="96.4" cy="32.3" r="4.2" fill="#fff" stroke="#1a73e8" stroke-width="2"/></svg>
<div class="t" style="top:664.00px;font-size:13px;line-height:13px;color:#3c4043;left:797.40px;transform-origin:0 0;transform:scaleX(1.0221);-webkit-text-stroke:0.2px currentColor;">Số người dùng đang hoạt động</div>
<div class="b" style="left:797.4px;top:678.5px;width:185px;height:1px;background:repeating-linear-gradient(90deg,#80868b 0 3px,transparent 3px 5px)"></div>
<div class="t" style="top:681.70px;font-size:13px;line-height:13px;color:#3c4043;left:797.40px;transform-origin:0 0;transform:scaleX(1.0295);-webkit-text-stroke:0.2px currentColor;">theo Nguồn/phương tiện ...</div>
<div class="b" style="left:829px;top:696.3px;width:120px;height:1px;background:repeating-linear-gradient(90deg,#80868b 0 3px,transparent 3px 5px)"></div>
<div class="b" style="left:974px;top:662px;width:52px;height:23px;border:1px solid #dadce0;border-radius:13px"></div>
<svg class="b" style="left:981px;top:666.5px;" width="16" height="16" viewBox="0 0 16 16"><circle cx="8" cy="8" r="6.9" fill="none" stroke="#137333" stroke-width="1.6"/><path d="M4.6 8.4 L7 10.8 L11.4 6.2" fill="none" stroke="#137333" stroke-width="1.6"/></svg>
<svg class="b" style="left:1008.5px;top:672.0px;" width="9" height="5" viewBox="0 0 9 5"><path d="M0.5 0.5 H8.5 L4.5 4.5Z" fill="#5f6368"/></svg>
<div class="t" style="top:703.89px;font-size:11px;line-height:11px;color:#5f6368;letter-spacing:0.8px;left:797.40px;transform-origin:0 0;transform:scaleX(0.9205);-webkit-text-stroke:0.2px #5f6368;">NGUỒN/PHƯƠNG TI...</div>
<div class="b" style="left:797.4px;top:717.2px;width:113.3px;height:1px;background:repeating-linear-gradient(90deg,#80868b 0 3px,transparent 3px 5px)"></div>
<div class="t" style="top:703.89px;font-size:11px;line-height:11px;color:#5f6368;letter-spacing:0.8px;left:931.30px;transform-origin:0 0;transform:scaleX(0.8935);-webkit-text-stroke:0.2px #5f6368;">SỐ NGƯỜI DÙN...</div>
<div class="b" style="left:931.3px;top:717.2px;width:85.1px;height:1px;background:repeating-linear-gradient(90deg,#80868b 0 3px,transparent 3px 5px)"></div>
<div class="b" style="left:797.4px;top:725px;width:231.19999999999993px;height:1px;background:#dadce0"></div>
<div class="t" style="top:732.00px;font-size:13px;line-height:13px;color:#3c4043;left:797.40px;transform-origin:0 0;transform:scaleX(0.9247);-webkit-text-stroke:0.2px currentColor;">(direct) / (none)</div>
<div class="t" style="top:732.00px;font-size:13px;line-height:13px;color:#3c4043;right:834.93px;transform-origin:100% 0;transform:scaleX(0.9000);-webkit-text-stroke:0.2px currentColor;">44 N</div>
<div class="b" style="left:797.4px;top:752px;width:231.19999999999993px;height:3px;background:#1a73e8"></div>
<div class="t" style="top:761.00px;font-size:13px;line-height:13px;color:#3c4043;left:797.40px;transform-origin:0 0;transform:scaleX(0.9177);-webkit-text-stroke:0.2px currentColor;">bing / organic</div>
<div class="t" style="top:761.00px;font-size:13px;line-height:13px;color:#3c4043;right:834.93px;transform-origin:100% 0;transform:scaleX(0.9000);-webkit-text-stroke:0.2px currentColor;">70</div>
<div class="b" style="left:797.4px;top:783px;width:231.19999999999993px;height:1px;background:#dadce0"></div>
<div class="b" style="left:797.4px;top:782px;width:2px;height:2px;background:#1a73e8"></div>
<div class="t" style="top:790.00px;font-size:13px;line-height:13px;color:#3c4043;left:797.40px;transform-origin:0 0;transform:scaleX(0.9178);-webkit-text-stroke:0.2px currentColor;">facebook.com / refer...</div>
<div class="t" style="top:790.00px;font-size:13px;line-height:13px;color:#3c4043;right:834.93px;transform-origin:100% 0;transform:scaleX(0.9000);-webkit-text-stroke:0.2px currentColor;">35</div>
<div class="b" style="left:797.4px;top:812px;width:231.19999999999993px;height:1px;background:#dadce0"></div>
<div class="b" style="left:797.4px;top:811px;width:2px;height:2px;background:#1a73e8"></div>
<div class="t" style="top:819.00px;font-size:13px;line-height:13px;color:#3c4043;left:797.40px;transform-origin:0 0;transform:scaleX(0.9194);-webkit-text-stroke:0.2px currentColor;">l.facebook.com / ref...</div>
<div class="t" style="top:819.00px;font-size:13px;line-height:13px;color:#3c4043;right:834.93px;transform-origin:100% 0;transform:scaleX(0.9000);-webkit-text-stroke:0.2px currentColor;">24</div>
<div class="b" style="left:797.4px;top:841px;width:231.19999999999993px;height:1px;background:#dadce0"></div>
<div class="b" style="left:797.4px;top:840px;width:2px;height:2px;background:#1a73e8"></div>
<div class="t" style="top:848.00px;font-size:13px;line-height:13px;color:#3c4043;left:797.40px;transform-origin:0 0;transform:scaleX(0.9132);-webkit-text-stroke:0.2px currentColor;">m.facebook.com / re...</div>
<div class="t" style="top:848.00px;font-size:13px;line-height:13px;color:#3c4043;right:834.93px;transform-origin:100% 0;transform:scaleX(0.9000);-webkit-text-stroke:0.2px currentColor;">20</div>
<div class="b" style="left:797.4px;top:870px;width:231.19999999999993px;height:1px;background:#dadce0"></div>
<div class="b" style="left:797.4px;top:869px;width:2px;height:2px;background:#1a73e8"></div>
<div class="t" style="top:664.00px;font-size:13px;line-height:13px;color:#3c4043;left:1085.50px;transform-origin:0 0;transform:scaleX(1.0444);-webkit-text-stroke:0.2px currentColor;">Phiên hoạt động theo</div>
<div class="b" style="left:1085.5px;top:678.5px;width:99px;height:1px;background:repeating-linear-gradient(90deg,#80868b 0 3px,transparent 3px 5px)"></div>
<div class="t" style="top:681.70px;font-size:13px;line-height:13px;color:#3c4043;left:1085.50px;transform-origin:0 0;transform:scaleX(1.0197);-webkit-text-stroke:0.2px currentColor;">Nguồn/phương tiện ...</div>
<div class="b" style="left:1085.5px;top:696.3px;width:121px;height:1px;background:repeating-linear-gradient(90deg,#80868b 0 3px,transparent 3px 5px)"></div>
<div class="b" style="left:1262px;top:662px;width:52px;height:23px;border:1px solid #dadce0;border-radius:13px"></div>
<svg class="b" style="left:1269px;top:666.5px;" width="16" height="16" viewBox="0 0 16 16"><circle cx="8" cy="8" r="6.9" fill="none" stroke="#137333" stroke-width="1.6"/><path d="M4.6 8.4 L7 10.8 L11.4 6.2" fill="none" stroke="#137333" stroke-width="1.6"/></svg>
<svg class="b" style="left:1296.5px;top:672.0px;" width="9" height="5" viewBox="0 0 9 5"><path d="M0.5 0.5 H8.5 L4.5 4.5Z" fill="#5f6368"/></svg>
<div class="t" style="top:703.89px;font-size:11px;line-height:11px;color:#5f6368;letter-spacing:0.8px;left:1085.50px;transform-origin:0 0;transform:scaleX(0.9167);-webkit-text-stroke:0.2px #5f6368;">NGUỒN/PHƯƠNG TI...</div>
<div class="b" style="left:1085.5px;top:717.2px;width:112.8px;height:1px;background:repeating-linear-gradient(90deg,#80868b 0 3px,transparent 3px 5px)"></div>
<div class="t" style="top:703.89px;font-size:11px;line-height:11px;color:#5f6368;letter-spacing:0.8px;left:1219.50px;transform-origin:0 0;transform:scaleX(0.9216);-webkit-text-stroke:0.2px #5f6368;">PHIÊN HOẠT Đ...</div>
<div class="b" style="left:1219.5px;top:717.2px;width:82.5px;height:1px;background:repeating-linear-gradient(90deg,#80868b 0 3px,transparent 3px 5px)"></div>
<div class="b" style="left:1085.5px;top:725px;width:230.5px;height:1px;background:#dadce0"></div>
<div class="t" style="top:732.00px;font-size:13px;line-height:13px;color:#3c4043;left:1085.50px;transform-origin:0 0;transform:scaleX(0.9258);-webkit-text-stroke:0.2px currentColor;">(direct) / (none)</div>
<div class="t" style="top:732.00px;font-size:13px;line-height:13px;color:#3c4043;right:547.53px;transform-origin:100% 0;transform:scaleX(0.9000);-webkit-text-stroke:0.2px currentColor;">50 N</div>
<div class="b" style="left:1085.5px;top:752px;width:230.5px;height:3px;background:#1a73e8"></div>
<div class="t" style="top:761.00px;font-size:13px;line-height:13px;color:#3c4043;left:1085.50px;transform-origin:0 0;transform:scaleX(0.9194);-webkit-text-stroke:0.2px currentColor;">l.facebook.com / ref...</div>
<div class="t" style="top:761.00px;font-size:13px;line-height:13px;color:#3c4043;right:548.30px;transform-origin:100% 0;transform:scaleX(0.9000);-webkit-text-stroke:0.2px currentColor;">155</div>
<div class="b" style="left:1085.5px;top:783px;width:230.5px;height:1px;background:#dadce0"></div>
<div class="b" style="left:1085.5px;top:782px;width:2px;height:2px;background:#1a73e8"></div>
<div class="t" style="top:790.00px;font-size:13px;line-height:13px;color:#3c4043;left:1085.50px;transform-origin:0 0;transform:scaleX(0.9139);-webkit-text-stroke:0.2px currentColor;">bing / organic</div>
<div class="t" style="top:790.00px;font-size:13px;line-height:13px;color:#3c4043;right:547.53px;transform-origin:100% 0;transform:scaleX(0.9000);-webkit-text-stroke:0.2px currentColor;">86</div>
<div class="b" style="left:1085.5px;top:812px;width:230.5px;height:1px;background:#dadce0"></div>
<div class="b" style="left:1085.5px;top:811px;width:2px;height:2px;background:#1a73e8"></div>
<div class="t" style="top:819.00px;font-size:13px;line-height:13px;color:#3c4043;left:1085.50px;transform-origin:0 0;transform:scaleX(0.9186);-webkit-text-stroke:0.2px currentColor;">facebook.com / refer...</div>
<div class="t" style="top:819.00px;font-size:13px;line-height:13px;color:#3c4043;right:547.53px;transform-origin:100% 0;transform:scaleX(0.9000);-webkit-text-stroke:0.2px currentColor;">31</div>
<div class="b" style="left:1085.5px;top:841px;width:230.5px;height:1px;background:#dadce0"></div>
<div class="b" style="left:1085.5px;top:840px;width:2px;height:2px;background:#1a73e8"></div>
<div class="t" style="top:848.00px;font-size:13px;line-height:13px;color:#3c4043;left:1085.50px;transform-origin:0 0;transform:scaleX(0.9085);-webkit-text-stroke:0.2px currentColor;">m.facebook.com / re...</div>
<div class="t" style="top:848.00px;font-size:13px;line-height:13px;color:#3c4043;right:547.53px;transform-origin:100% 0;transform:scaleX(0.9000);-webkit-text-stroke:0.2px currentColor;">20</div>
<div class="b" style="left:1085.5px;top:870px;width:230.5px;height:1px;background:#dadce0"></div>
<div class="b" style="left:1085.5px;top:869px;width:2px;height:2px;background:#1a73e8"></div>
<div class="t" style="top:664.00px;font-size:13px;line-height:13px;color:#3c4043;left:1373.70px;transform-origin:0 0;-webkit-text-stroke:0.2px currentColor;">Tổng số người mua so với Số người mua lần đầu</div>
<div class="b" style="left:1694px;top:662px;width:52px;height:23px;border:1px solid #dadce0;border-radius:13px"></div>
<svg class="b" style="left:1701px;top:666.5px;" width="16" height="16" viewBox="0 0 16 16"><circle cx="8" cy="8" r="6.9" fill="none" stroke="#137333" stroke-width="1.6"/><path d="M4.6 8.4 L7 10.8 L11.4 6.2" fill="none" stroke="#137333" stroke-width="1.6"/></svg>
<svg class="b" style="left:1728.5px;top:672.0px;" width="9" height="5" viewBox="0 0 9 5"><path d="M0.5 0.5 H8.5 L4.5 4.5Z" fill="#5f6368"/></svg>
<div class="b" style="left:1378px;top:706px;width:338px;height:1px;background:#e8eaed"></div>
<div class="b" style="left:1719px;top:706px;width:27px;height:1px;background:#e8eaed"></div>
<div class="b" style="left:1378px;top:754px;width:338px;height:1px;background:#e8eaed"></div>
<div class="b" style="left:1719px;top:754px;width:27px;height:1px;background:#e8eaed"></div>
<div class="b" style="left:1378px;top:802px;width:338px;height:1px;background:#e8eaed"></div>
<div class="b" style="left:1719px;top:802px;width:27px;height:1px;background:#e8eaed"></div>
<div class="b" style="left:1378px;top:850px;width:338px;height:1px;background:#e8eaed"></div>
<div class="b" style="left:1719px;top:850px;width:27px;height:1px;background:#e8eaed"></div>
<div class="t" style="top:709.09px;font-size:11px;line-height:11px;color:#5f6368;right:115.88px;transform-origin:100% 0;">4</div>
<div class="t" style="top:755.99px;font-size:11px;line-height:11px;color:#5f6368;right:115.88px;transform-origin:100% 0;">3</div>
<div class="t" style="top:803.69px;font-size:11px;line-height:11px;color:#5f6368;right:115.88px;transform-origin:100% 0;">2</div>
<div class="t" style="top:853.19px;font-size:11px;line-height:11px;color:#5f6368;right:115.88px;transform-origin:100% 0;">1</div>
<svg class="b" style="left:1560px;top:740px;" width="100" height="130" viewBox="0 0 100 130"><polyline points="8.7,140 17.6,61.3 26.6,140" fill="none" stroke="#6f2bd9" stroke-width="2"/><polyline points="37.6,135 42.6,107.6 48.5,135" fill="none" stroke="#6f2bd9" stroke-width="2"/><path d="M59.3 131 Q65.5 47.5 80.4 14.2 L90.3 140" fill="none" stroke="#6f2bd9" stroke-width="2"/></svg>
<div class="b" style="left:783px;top:719px;width:548px;height:40px;border:3px solid #ff0000;border-radius:2px;box-sizing:border-box"></div>
<svg class="b" style="left:1552px;top:742px" width="279" height="112" viewBox="0 0 279 112">
<defs>
<linearGradient id="gd" gradientUnits="userSpaceOnUse" x1="45" y1="32" x2="68" y2="77"><stop offset="0" stop-color="#6fe3b0"/><stop offset="1" stop-color="#f2e04a"/></linearGradient>
<linearGradient id="gt" x1="0" y1="0" x2="1" y2="0"><stop offset="0" stop-color="#8fe0b0"/><stop offset="1" stop-color="#66aaee"/></linearGradient>
<linearGradient id="ga1" gradientUnits="userSpaceOnUse" x1="53" y1="20" x2="17" y2="57"><stop offset="0" stop-color="#e87090" stop-opacity="0.15"/><stop offset="1" stop-color="#e87090" stop-opacity="1"/></linearGradient><linearGradient id="ga2" gradientUnits="userSpaceOnUse" x1="58" y1="91" x2="94" y2="53"><stop offset="0" stop-color="#e87090" stop-opacity="0.15"/><stop offset="1" stop-color="#e87090" stop-opacity="1"/></linearGradient></defs>
<rect x="0" y="0" width="279" height="112" rx="31" fill="#1a5686" fill-opacity="0.82"/>
<path d="M53.3 19.7 Q28 24 17.4 57.5" fill="none" stroke="url(#ga1)" stroke-width="2.6"/>
<path d="M12.4 53.5 L17.4 58 L23.2 54.5" fill="none" stroke="#e87090" stroke-width="2.6" stroke-linejoin="round"/>
<path d="M57.8 91.4 Q88 86 93.7 53.5" fill="none" stroke="url(#ga2)" stroke-width="2.6"/>
<path d="M87.7 57.5 L93.7 52.6 L98.2 58.5" fill="none" stroke="#e87090" stroke-width="2.6" stroke-linejoin="round"/>
<path d="M64.5 46.5 Q64.5 41 56.25 41 Q48 41 48 47.5 Q48 52 56.25 54.2 Q64.5 56.5 64.5 61.5 Q64.5 67.5 56.25 67.5 Q48 67.5 48 62.5 M56.25 35.5 V41 M56.25 67.5 V72.8" fill="none" stroke="url(#gd)" stroke-width="7.5" stroke-linecap="round"/>
<text x="112.5" y="64.5" font-family="Liberation Sans" font-weight="700" font-size="30" fill="#fff" textLength="153" lengthAdjust="spacingAndGlyphs">MMO4ME</text>
<text x="111.4" y="84.7" font-family="Liberation Sans" font-size="15" fill="url(#gt)" textLength="154.6" lengthAdjust="spacingAndGlyphs">Make money online</text>
<polygon points="67.00,12.10 68.72,16.23 73.18,16.59 69.78,19.50 70.82,23.86 67.00,21.53 63.18,23.86 64.22,19.50 60.82,16.59 65.28,16.23" fill="#f5e27a"/><polygon points="83.80,20.10 85.52,24.23 89.98,24.59 86.58,27.50 87.62,31.86 83.80,29.53 79.98,31.86 81.02,27.50 77.62,24.59 82.08,24.23" fill="#f5e27a"/><polygon points="93.50,34.50 95.22,38.63 99.68,38.99 96.28,41.90 97.32,46.26 93.50,43.92 89.68,46.26 90.72,41.90 87.32,38.99 91.78,38.63" fill="#f5e27a"/><polygon points="20.20,64.50 21.92,68.63 26.38,68.99 22.98,71.90 24.02,76.26 20.20,73.92 16.38,76.26 17.42,71.90 14.02,68.99 18.48,68.63" fill="#f5e27a"/><polygon points="30.20,79.70 31.92,83.83 36.38,84.19 32.98,87.10 34.02,91.46 30.20,89.13 26.38,91.46 27.42,87.10 24.02,84.19 28.48,83.83" fill="#f5e27a"/><polygon points="47.60,87.80 49.32,91.93 53.78,92.29 50.38,95.20 51.42,99.56 47.60,97.22 43.78,99.56 44.82,95.20 41.42,92.29 45.88,91.93" fill="#f5e27a"/>
</svg>
</body></html>
